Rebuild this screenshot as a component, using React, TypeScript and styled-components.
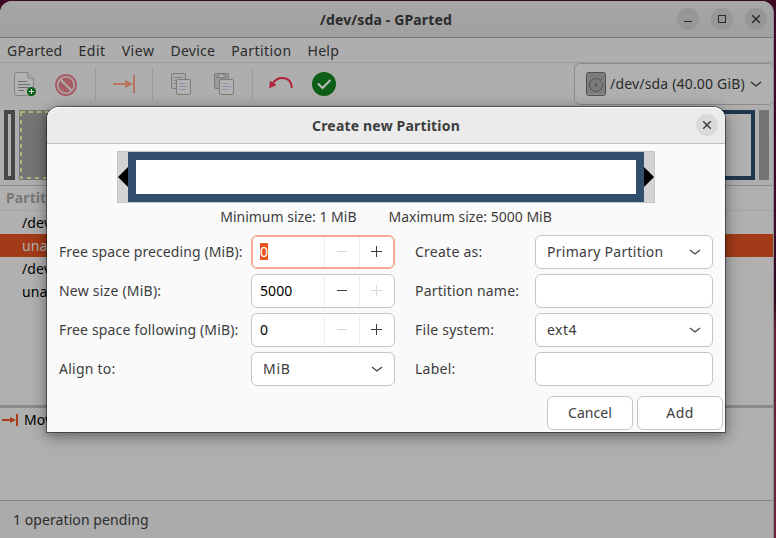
import React from 'react';
import styled, { createGlobalStyle } from 'styled-components';

const GlobalStyle = createGlobalStyle`
  * { box-sizing: border-box; }
  body {
    margin: 0;
    overflow: hidden;
    font: 14px/20px "Noto Sans", "Open Sans", sans-serif;
    color: #3d3d3d;
  }
`;

const Desktop = styled.div`
  position: relative;
  width: 776px;
  height: 538px;
  padding-top: 1px;
  background: linear-gradient(#3d0a26 0, #40092a 200px, #310820 300px, #64203a 330px, #712338 538px);
`;

const Window = styled.div`
  display: flex;
  flex-direction: column;
  width: 774px;
  height: 537px;
  background: #aeaeae;
  border-radius: 12px 12px 0 0;
  border-right: 1px solid #8d8d8d;
  overflow: hidden;
`;

const Label = styled.span<{ $track?: number }>`
  letter-spacing: ${p => p.$track ?? 0.1}px;
  white-space: nowrap;
`;

const TitleBar = styled.header`
  display: grid;
  grid-template-columns: 1fr auto 1fr;
  align-items: center;
  flex: none;
  height: 37px;
  padding: 0 6px 0 5px;
  color: #2b2b2b;
  font-weight: 700;
  background: linear-gradient(#a6a6a6, #a0a0a0);
  border-bottom: 1px solid #7e7e7e;
  > span { padding-top: 1px; }
`;

const WindowButtons = styled.div`
  display: flex;
  justify-content: flex-end;
  gap: 12px;
`;

const RoundButton = styled.button<{ $light?: boolean }>`
  display: grid;
  place-items: center;
  width: 22px;
  height: 22px;
  padding: 0;
  border: 0;
  border-radius: 50%;
  color: ${p => (p.$light ? '#3d3d3d' : '#2b2b2b')};
  background: ${p => (p.$light ? '#dadada' : '#979797')};
`;

const MenuBar = styled.nav`
  display: flex;
  flex: none;
  gap: 16px;
  height: 25px;
  padding: 3px 7px 0;
  color: #2b2b2b;
  border-bottom: 1px solid #9b9b9b;
`;

const Toolbar = styled.div`
  display: flex;
  align-items: center;
  flex: none;
  height: 42px;
  padding-left: 12px;
`;

const ToolGroup = styled.div`
  display: flex;
  gap: 19px;
  padding-right: 16px;
  & + & {
    border-left: 1px solid #9b9b9b;
    padding-left: 16px;
    height: 34px;
    align-items: center;
  }
  svg { display: block; }
`;

const DeviceSelect = styled.button`
  display: flex;
  align-items: center;
  gap: 4px;
  width: 200px;
  height: 42px;
  margin-left: auto;
  margin-right: -1px;
  padding: 0 11px;
  font: inherit;
  color: #2b2b2b;
  background: #b0b0b0;
  border: 1px solid #8c8c8c;
  border-radius: 6px;
  svg:last-child { margin-left: auto; }
`;

const DiskMap = styled.div`
  display: flex;
  flex: none;
  gap: 4px;
  height: 80px;
  padding: 5px 4px;
`;

const Block = styled.div<{ $width?: number; $fill: string; $edge?: string }>`
  flex: ${p => (p.$width ? `0 0 ${p.$width}px` : '1')};
  background: ${p => p.$fill};
  border: ${p => p.$edge ?? '0'};
`;

const DashedBlock = styled.div`
  flex: 0 0 520px;
  background: #757575;
  svg { display: block; }
`;

const Tree = styled.section`
  flex: none;
  height: 220px;
  background: #b0b0b0;
  border-top: 1px solid #8c8c8c;
`;

const TreeHeader = styled.div`
  height: 25px;
  padding: 2px 6px;
  font-weight: 700;
  color: #777;
  border-bottom: 1px solid #a5a5a5;
`;

const TreeRow = styled.div<{ $selected?: boolean }>`
  height: 23px;
  padding: 2px 0 0 22px;
  color: ${p => (p.$selected ? '#b0b0b0' : '#000')};
  background: ${p => (p.$selected ? '#a33b18' : 'transparent')};
`;

const Operations = styled.section`
  flex: 1;
  background: #b0b0b0;
  border-top: 3px solid #8a8a8a;
`;

const Operation = styled.div`
  display: flex;
  align-items: center;
  gap: 6px;
  height: 24px;
  padding: 0 2px;
  color: #000;
`;

const StatusBar = styled.footer`
  flex: none;
  height: 38px;
  padding: 9px 13px;
  color: #2b2b2b;
  background: #ababab;
  border-top: 1px solid #858585;
`;

const Dialog = styled.div`
  position: absolute;
  left: 47px;
  top: 107px;
  display: flex;
  flex-direction: column;
  width: 678px;
  height: 325px;
  background: #fafafa;
  border-radius: 12px 12px 0 0;
  box-shadow: 0 0 0 1px rgba(0, 0, 0, 0.45), 0 3px 12px 1px rgba(0, 0, 0, 0.36), 0 6px 24px rgba(0, 0, 0, 0.12);
`;

const DialogHeader = styled.header`
  display: grid;
  grid-template-columns: 1fr auto 1fr;
  align-items: center;
  flex: none;
  height: 37px;
  padding: 0 7px;
  font-weight: 700;
  background: #ebebeb;
  border-radius: 12px 12px 0 0;
  border-bottom: 1px solid #bfbfbf;
  box-shadow: inset 0 1px #fff;
  > span { padding-top: 2px; }
  button { justify-self: end; }
`;

const Resizer = styled.div`
  display: flex;
  align-items: center;
  align-self: center;
  flex: none;
  width: 538px;
  height: 52px;
  margin: 7px 0 0 0;
  background: #d3d3d3;
  border: 1px solid #c6c6c6;
`;

const ResizerBody = styled.div`
  flex: 1;
  height: 50px;
  background: #fff;
  border: 8px solid #314e6c;
`;

const Limits = styled.div`
  display: flex;
  justify-content: center;
  gap: 32px;
  height: 32px;
  padding: 4px 0 0;
`;

const Form = styled.div`
  display: flex;
  gap: 20px;
  padding: 0 12px;
`;

const FieldGrid = styled.div<{ $label: number; $field: number }>`
  display: grid;
  grid-template-columns: ${p => p.$label}px ${p => p.$field}px;
  grid-auto-rows: 34px;
  gap: 5px 0;
  align-items: center;
`;

const control = `
  width: 100%;
  height: 34px;
  background: #fff;
  border: 1px solid #c5c5c5;
  border-radius: 6px;
`;

const TextField = styled.div`${control}`;

const Dropdown = styled.div`
  ${control}
  display: flex;
  align-items: center;
  justify-content: space-between;
  padding: 0 11px;
`;

const Spin = styled.div<{ $focused?: boolean }>`
  ${control}
  display: grid;
  grid-template-columns: 1fr 35px 35px;
  overflow: hidden;
  border-color: ${p => (p.$focused ? '#f4aa90' : '#c5c5c5')};
  box-shadow: ${p => (p.$focused ? 'inset 0 0 0 1px #f4aa90' : 'none')};
`;

const SpinValue = styled.div`
  padding: 6px 8px;
  color: #000;
`;

const Selection = styled.span`
  display: inline-block;
  height: 17px;
  line-height: 17px;
  margin-top: 1px;
  color: #fff;
  background: #e95420;
`;

const SpinButton = styled.div<{ $off?: boolean }>`
  display: grid;
  place-items: center;
  margin: 1px 0;
  padding: 0 2px 2px 0;
  color: ${p => (p.$off ? '#d9d9d9' : '#3d3d3d')};
  border-left: 1px solid #ececec;
`;

const Actions = styled.footer`
  display: flex;
  justify-content: flex-end;
  gap: 4px;
  padding: 10px 2px 0;
`;

const ActionButton = styled.button`
  ${control}
  width: 86px;
  padding: 0;
  font: inherit;
  color: #3d3d3d;
`;

const Chevron = () => (
  <svg width="12" height="8" viewBox="0 0 12 8" fill="none" stroke="currentColor" strokeWidth="1.2">
    <path d="M1 2 6 6l5-4" />
  </svg>
);

const Cross = () => (
  <svg width="10" height="10" viewBox="0 0 10 10" stroke="currentColor" strokeWidth="1.5">
    <path d="m1.2 1.2 7.6 7.6M8.800 1.2 1.200 8.800" />
  </svg>
);

const NewIcon = () => (
  <svg width="24" height="24" viewBox="0 0 24 24" fill="none">
    <path d="M4.500 .5h11l6 6v15q0 2-2 2h-15q-2 0-2-2v-19q0-2 2-2Z" fill="#b3b3b3" stroke="#838383" />
    <path d="M15.500 .5v4q0 2 2 2h4" fill="#a5a5a5" stroke="#838383" />
    <path d="M6 9.500h9M6 12.500h12M6 15.500h11M6 18.500h6" stroke="#6e6e6e" />
    <circle cx="19.500" cy="19.500" r="4.500" fill="#0d6119" />
    <path d="M17 19.500h5M19.500 17v5" stroke="#ddd" />
  </svg>
);

const StopIcon = () => (
  <svg width="24" height="24" viewBox="0 0 24 24" fill="none">
    <circle cx="11" cy="13" r="10" stroke="#a75d63" strokeWidth="2" />
    <circle cx="11" cy="13" r="7.500" fill="#a75d63" />
    <path d="m5.500 7.500 11 11" stroke="#aeaeae" strokeWidth="2" />
  </svg>
);

const MoveIcon = () => (
  <svg width="24" height="24" viewBox="0 0 24 24" fill="#b87460">
    <path d="M1 11h12V8l8 4-8 4v-3H1ZM21 3h2v18h-2Z" />
  </svg>
);

const CopyIcon = ({ clipboard }: { clipboard?: boolean }) => (
  <svg width="24" height="24" viewBox="0 0 24 24" fill="none">
    <rect x="2.500" y="1.500" width="14" height="15" rx="1.500" fill={clipboard ? '#9a9a9a' : '#ababab'} stroke="#7b7b7b" />
    {clipboard ? (
      <path d="M5 5.500q0-2 2-2 .5-2 2.500-2t2.500 2q2 0 2 2Z" fill="#b0b0b0" stroke="#757575" />
    ) : (
      <path d="M5 5.500h9M5 8.500h3M5 11.500h3" stroke="#858585" />
    )}
    <rect x="7.500" y="7.500" width="14" height="15" rx="1.500" fill="#b2b2b2" stroke="#7b7b7b" />
    <path d="M10 11.500h6M10 14.500h9M10 17.500h7" stroke="#9294b3" />
  </svg>
);

const UndoIcon = () => (
  <svg width="24" height="24" viewBox="0 0 24 24" fill="none">
    <path d="M23 16Q22 6.200 14 6 7.500 5.600 3.800 11.500" stroke="#b22236" strokeWidth="2" />
    <path d="M.2 16.200 1 8.700l6.500 4.300Z" fill="#b22236" />
  </svg>
);

const ApplyIcon = () => (
  <svg width="24" height="24" viewBox="0 0 24 24" fill="none">
    <circle cx="12" cy="12" r="12" fill="#0d5f17" />
    <path d="m6 11.500 4.500 4.500 8-8" stroke="#bcbcbc" strokeWidth="2" />
  </svg>
);

const DiskIcon = () => (
  <svg width="20" height="24" viewBox="0 0 20 24" fill="none" stroke="#555">
    <rect x=".5" y=".5" width="19" height="23" rx="2" fill="#7c7c7c" stroke="#505050" />
    <path d="M1.500 22.200h17" stroke="#929292" />
    <path d="M13.500 7.500a6.500 6.500 0 1 0 2.700 3.500M13.500 9.500l3-3" />
    <circle cx="10" cy="13" r="1.200" />
  </svg>
);

const OperationIcon = () => (
  <svg width="16" height="14" viewBox="0 0 16 14" fill="#a83e1b">
    <path d="M0 6h8V4l6 3-6 3V8H0ZM14 1h2v12h-2Z" />
  </svg>
);

const Handle = ({ right }: { right?: boolean }) => (
  <svg width="10" height="20" viewBox="0 0 10 20">
    <path d={right ? 'M0 0 10 10 0 20Z' : 'M10 0 0 10l10 10Z'} fill="#000" />
  </svg>
);

const SpinGlyph = ({ plus }: { plus?: boolean }) => (
  <svg width="12" height="12" viewBox="0 0 12 12" stroke="currentColor" strokeWidth="1" shapeRendering="crispEdges">
    <path d={plus ? 'M1 6.500h11M6.500 1v11' : 'M2 6.500h10'} />
  </svg>
);

function SpinBox({ value, track, focused, atMin, atMax }: { value: string; track?: number; focused?: boolean; atMin?: boolean; atMax?: boolean }) {
  return (
    <Spin $focused={focused}>
      <SpinValue>{focused ? <Selection>{value}</Selection> : <Label $track={track}>{value}</Label>}</SpinValue>
      <SpinButton $off={atMin}><SpinGlyph /></SpinButton>
      <SpinButton $off={atMax}><SpinGlyph plus /></SpinButton>
    </Spin>
  );
}

const menus: [string, number][] = [['GParted', 0.22], ['Edit', 0.55], ['View', 0.55], ['Device', 0.24], ['Partition', 0.42], ['Help', 0.3]];

const rows = ['/dev/sda1', 'unallocated', '/dev/sda2', 'unallocated'];

export default function App() {
  return (
    <>
      <GlobalStyle />
      <Desktop>
        <Window>
          <TitleBar>
            <span />
            <Label $track={0.15}>/dev/sda - GParted</Label>
            <WindowButtons>
              <RoundButton>
                <svg width="10" height="10" stroke="currentColor"><path d="M1 7.500h8" /></svg>
              </RoundButton>
              <RoundButton>
                <svg width="8" height="8" fill="none" stroke="currentColor"><rect x=".5" y=".5" width="7" height="7" /></svg>
              </RoundButton>
              <RoundButton><Cross /></RoundButton>
            </WindowButtons>
          </TitleBar>
          <MenuBar>
            {menus.map(([name, track]) => <Label key={name} $track={track}>{name}</Label>)}
          </MenuBar>
          <Toolbar>
            <ToolGroup><NewIcon /><StopIcon /></ToolGroup>
            <ToolGroup><MoveIcon /></ToolGroup>
            <ToolGroup><CopyIcon /><CopyIcon clipboard /></ToolGroup>
            <ToolGroup><UndoIcon /><ApplyIcon /></ToolGroup>
            <DeviceSelect>
              <DiskIcon />
              <Label $track={0.18}>/dev/sda (40.00 GiB)</Label>
              <Chevron />
            </DeviceSelect>
          </Toolbar>
          <DiskMap>
            <Block $width={11} $fill="#b0b0b0" $edge="4px solid #474747" />
            <DashedBlock>
              <svg width="520" height="70">
                <rect x="2" y="2" width="516" height="66" fill="none" stroke="#b2b37c" strokeWidth="2" strokeDasharray="4 4" />
              </svg>
            </DashedBlock>
            <Block $fill="#b0b0b0" $edge="4px solid #20374d" />
            <Block $width={10} $fill="#757575" />
          </DiskMap>
          <Tree>
            <TreeHeader><Label>Partition</Label></TreeHeader>
            {rows.map((name, i) => (
              <TreeRow key={i} $selected={i === 1}><Label>{name}</Label></TreeRow>
            ))}
          </Tree>
          <Operations>
            <Operation><OperationIcon /><Label>Move</Label></Operation>
          </Operations>
          <StatusBar><Label $track={0.08}>1 operation pending</Label></StatusBar>
        </Window>

        <Dialog role="dialog">
          <DialogHeader>
            <span />
            <Label $track={0.18}>Create new Partition</Label>
            <RoundButton $light><Cross /></RoundButton>
          </DialogHeader>
          <Resizer><Handle /><ResizerBody /><Handle right /></Resizer>
          <Limits>
            <Label $track={0}>Minimum size: 1 MiB</Label>
            <Label $track={0}>Maximum size: 5000 MiB</Label>
          </Limits>
          <Form>
            <FieldGrid $label={192} $field={144}>
              <Label $track={0.1}>Free space preceding (MiB):</Label>
              <SpinBox value="0" focused atMin />
              <Label $track={0.23}>New size (MiB):</Label>
              <SpinBox value="5000" track={0.1} atMax />
              <Label $track={0.15}>Free space following (MiB):</Label>
              <SpinBox value="0" atMin />
              <Label $track={0.24}>Align to:</Label>
              <Dropdown><Label $track={0.7}>MiB</Label><Chevron /></Dropdown>
            </FieldGrid>
            <FieldGrid $label={120} $field={178}>
              <Label $track={0.25}>Create as:</Label>
              <Dropdown><Label $track={0.27}>Primary Partition</Label><Chevron /></Dropdown>
              <Label $track={0.18}>Partition name:</Label>
              <TextField />
              <Label $track={0.25}>File system:</Label>
              <Dropdown><Label $track={0.5}>ext4</Label><Chevron /></Dropdown>
              <Label $track={0.25}>Label:</Label>
              <TextField />
            </FieldGrid>
          </Form>
          <Actions>
            <ActionButton><Label $track={0.05}>Cancel</Label></ActionButton>
            <ActionButton><Label $track={0.4}>Add</Label></ActionButton>
          </Actions>
        </Dialog>
      </Desktop>
    </>
  );
}
